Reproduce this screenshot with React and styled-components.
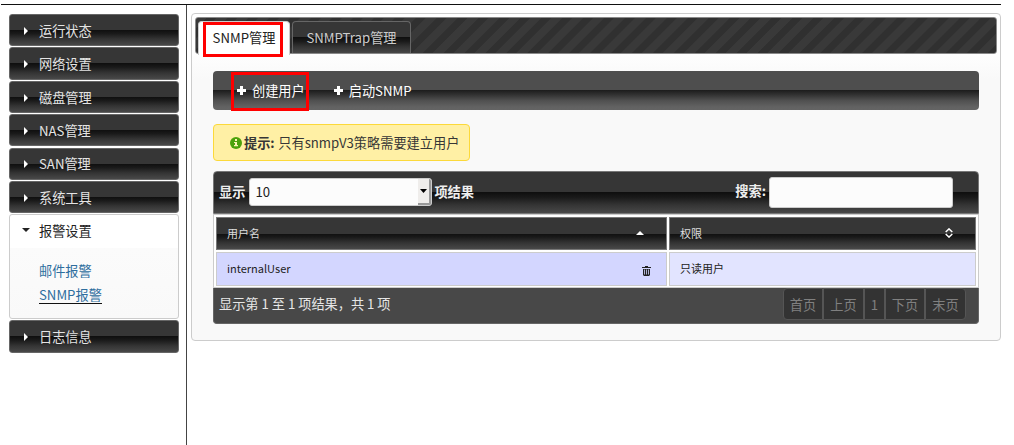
import React from 'react';
import styled, { createGlobalStyle, css } from 'styled-components';

const GlobalStyle = createGlobalStyle`
  * { box-sizing: border-box; }
  body {
    margin: 0;
    background: #fff;
    overflow: hidden;
    font: 13.2px/20px "Noto Sans CJK SC", "Noto Sans", sans-serif;
    color: #222;
  }
`;

const gloss = css`
  background: linear-gradient(#363636 0, #363636 50%, #0f0f0f 50%, #1a1a1a 62%, #343434 80%, #484848 100%);
`;

const Page = styled.div`
  width: 1001px;
  height: 445px;
  padding: 4px 0 0 1px;
`;
const Frame = styled.div`
  display: flex;
  height: 441px;
  border-top: 1px solid #111;
`;
const Sidebar = styled.nav`
  width: 186px;
  padding: 9px 7px 0 8px;
  border-right: 1px solid #444;
`;
const MenuHead = styled.div`
  display: flex;
  align-items: center;
  height: 32.2px;
  padding: 1.7px 0 0 13px;
  gap: 9px;
  margin-bottom: 1.2px;
  color: #e4e4e4;
  border: 1px solid #666;
  border-radius: 3px;
  ${gloss}
`;
const OpenSection = styled.div`
  height: 105px;
  margin-bottom: 1.2px;
  border: 1px solid #ccc;
  border-radius: 3px;
  background: linear-gradient(#fff 0, #fff 33px, #fbfbfb 33px, #f9f9f9 100%);
`;
const OpenHead = styled.div`
  display: flex;
  align-items: center;
  height: 32px;
  padding: 0 0 0 12px;
  gap: 9px;
  svg { margin-top: -2px; }
`;
const SubLinks = styled.div`
  display: flex;
  flex-direction: column;
  align-items: flex-start;
  gap: 5px;
  padding: 14px 0 0 29px;
`;
const SubLink = styled.a`
  height: 19px;
  color: #2e6e9e;
  border-bottom: 1px solid ${p => (p.$current ? '#111' : 'transparent')};
`;
const Panel = styled.main`
  width: 810px;
  height: 328px;
  margin: 8px 0 0 4px;
  padding: 3px;
  border: 1px solid #ccc;
  border-radius: 4px;
  background: linear-gradient(#fff 0, #fff 35px, #f9f9f9 65px);
`;
const TabBar = styled.div`
  display: flex;
  gap: 2px;
  height: 37px;
  padding: 3px 0 0 2px;
  border: 1px solid #8a8a8a;
  border-radius: 3px;
  background: repeating-linear-gradient(135deg, #393939 0, #393939 7px, #303030 7.8px, #303030 14px, #393939 14.8px);
`;
const Tab = styled.div`
  display: flex;
  justify-content: center;
  align-items: center;
  width: ${p => p.$w}px;
  height: 32px;
  color: #ccc;
  border: 1px solid #666;
  border-bottom: 0;
  border-radius: 4px 4px 0 0;
  ${gloss}
  ${p => p.$active && css`
    height: 34px;
    padding-bottom: 2px;
    color: #222;
    background: #fff;
    border-color: #ccc;
  `}
`;
const Marker = styled.span`
  position: absolute;
  left: ${p => p.$x}px;
  top: ${p => p.$y}px;
  width: ${p => p.$w}px;
  height: ${p => p.$h}px;
  border: 3px solid #f00;
`;
const Content = styled.div`
  display: flex;
  flex-direction: column;
  align-items: flex-start;
  padding: 17px 18px 0;
`;
const Toolbar = styled.div`
  display: flex;
  align-items: center;
  gap: 29px;
  width: 766px;
  height: 39px;
  padding: 0 0 0 24px;
  border-radius: 4px;
  color: #fff;
  background: linear-gradient(#4e4e4e 0, #4e4e4e 49%, #1c1c1c 49%, #303030 60%, #505050 76%, #626262 92%, #646464);
`;
const Action = styled.div`
  display: flex;
  align-items: center;
  gap: 6px;
`;
const Notice = styled.div`
  display: flex;
  align-items: center;
  width: 257px;
  height: 37px;
  margin: 14px 0 10px;
  padding: 0 0 0 16px;
  border: 1px solid #fcd93a;
  border-radius: 4px;
  background: #fff0a5;
  color: #363636;
  white-space: nowrap;
  svg { margin-right: 2px; }
  b { margin-right: 3.6px; }
`;
const TableTop = styled.div`
  display: flex;
  align-items: center;
  width: 766px;
  height: 43px;
  padding: 0 25px 2px 5px;
  border: 1px solid #777;
  border-radius: 4px 4px 0 0;
  color: #eee;
  font-weight: bold;
  ${gloss}
`;
const Caption = styled.span`
  padding-top: 1px;
`;
const Select = styled.div`
  display: flex;
  justify-content: space-between;
  width: 183px;
  height: 28px;
  margin: 0 2px 0 4px;
  padding-left: 5px;
  border: 1px solid #ccc;
  border-radius: 3px;
  background: #fcfcfc;
  color: #222;
  font-weight: normal;
  line-height: 26px;
  overflow: hidden;
`;
const SelectArrow = styled.span`
  display: flex;
  align-items: center;
  justify-content: center;
  width: 13px;
  height: 26px;
  background: #efedeb;
  border: solid #999;
  border-width: 0 2px 2px 0;
`;
const SearchLabel = styled.span`
  margin-left: auto;
  padding-bottom: 1px;
`;
const SearchInput = styled.input`
  width: 184px;
  height: 31px;
  margin: 2px 0 0 3px;
  border: 1px solid #ccc;
  border-radius: 3px;
  background: #fcfcfc;
`;
const Grid = styled.div`
  display: grid;
  grid-template-columns: 451px 307px;
  grid-template-rows: 33px 34px;
  gap: 2px;
  width: 766px;
  height: 74px;
  padding: 2px 0 0 2px;
  border: 1px solid #ccc;
  background: #fff;
  font-size: 11px;
`;
const HeadCell = styled.div`
  display: flex;
  align-items: center;
  justify-content: space-between;
  padding: 0 22px 1px 10px;
  border: 1px solid #777;
  color: #ddd;
  ${gloss}
`;
const Cell = styled.div`
  display: flex;
  align-items: center;
  justify-content: space-between;
  padding: 0 15px 2px 10px;
  border: 1px solid #ccc;
  background: ${p => p.$bg};
  svg { margin-top: 6px; }
`;
const TableFoot = styled.div`
  display: flex;
  justify-content: space-between;
  width: 766px;
  height: 36px;
  padding: 0 12px 0 5px;
  border: solid #666;
  border-width: 0 1px 1px;
  border-radius: 0 0 4px 4px;
  background: #484848;
  color: #e6e6e6;
  line-height: 31px;
`;
const Pager = styled.div`
  display: flex;
  height: 32px;
`;
const PageButton = styled.span`
  width: ${p => p.$w}px;
  border: 1px solid #555;
  background: #333;
  color: #808080;
  text-align: center;
  line-height: 31px;
  &:first-child { border-radius: 4px 0 0 4px; }
  &:last-child { border-radius: 0 4px 4px 0; }
`;

const ArrowRight = () => (
  <svg width="7" height="8" viewBox="0 0 7 8"><path d="M1 0L5 4L1 8Z" fill="#fff" /></svg>
);
const ArrowDown = ({ w = 8, h = 4, fill = '#222' }) => (
  <svg width={w} height={h} viewBox="0 0 8 4" preserveAspectRatio="none"><path d="M0 0H8L4 4Z" fill={fill} /></svg>
);
const Plus = () => (
  <svg width="9" height="9" viewBox="0 0 9 9"><path d="M3 0H6V3H9V6H6V9H3V6H0V3H3Z" fill="#fff" /></svg>
);
const Info = () => (
  <svg width="12" height="12" viewBox="0 0 12 12">
    <circle cx="6" cy="6" r="6" fill="#4ca20b" />
    <path d="M5 2H7V4H5ZM4 5H7V8H8V9.3H4V8H5V6H4Z" fill="#fff3b5" />
  </svg>
);
const Trash = () => (
  <svg width="9" height="10" viewBox="0 0 9 10">
    <path d="M3 0H6V1H9V2H0V1H3ZM1 3H8V9L7 10H2L1 9Z" fill="#222" />
    <path d="M2.5 3.5V8.5M4.5 3.5V8.5M6.5 3.5V8.5" stroke="#d3d6ff" strokeWidth=".8" />
  </svg>
);
const SortUp = () => (
  <svg width="8" height="4" viewBox="0 0 8 4"><path d="M0 4L4 0L8 4Z" fill="#fff" /></svg>
);
const SortBoth = () => (
  <svg width="8" height="10" viewBox="0 0 8 10" fill="none" stroke="#fff" strokeWidth="1.5">
    <path d="M.7 4L4 .9L7.3 4M.7 6L4 9.1L7.3 6" />
  </svg>
);

const MENU = ['运行状态', '网络设置', '磁盘管理', 'NAS管理', 'SAN管理', '系统工具'];
const PAGES = [['首页', 40], ['上页', 41], ['1', 21], ['下页', 40], ['末页', 41]];

export default function App() {
  return (
    <Page>
      <GlobalStyle />
      <Frame>
        <Sidebar>
          {MENU.map(t => <MenuHead key={t}><ArrowRight />{t}</MenuHead>)}
          <OpenSection>
            <OpenHead><ArrowDown />报警设置</OpenHead>
            <SubLinks>
              <SubLink>邮件报警</SubLink>
              <SubLink $current>SNMP报警</SubLink>
            </SubLinks>
          </OpenSection>
          <MenuHead><ArrowRight />日志信息</MenuHead>
        </Sidebar>
        <Panel>
          <TabBar>
            <Tab $active $w={92}>SNMP管理</Tab>
            <Tab $w={119}>SNMPTrap管理</Tab>
          </TabBar>
          <Content>
            <Toolbar>
              <Action><Plus />创建用户</Action>
              <Action><Plus />启动SNMP</Action>
            </Toolbar>
            <Notice><Info /><b>提示:</b>只有snmpV3策略需要建立用户</Notice>
            <TableTop>
              <Caption>显示</Caption>
              <Select>10<SelectArrow><ArrowDown w={7} h={4} fill="#000" /></SelectArrow></Select>
              <Caption>项结果</Caption>
              <SearchLabel>搜索:</SearchLabel>
              <SearchInput />
            </TableTop>
            <Grid>
              <HeadCell>用户名<SortUp /></HeadCell>
              <HeadCell>权限<SortBoth /></HeadCell>
              <Cell $bg="#d3d6ff">internalUser<Trash /></Cell>
              <Cell $bg="#e2e4ff">只读用户</Cell>
            </Grid>
            <TableFoot>
              显示第 1 至 1 项结果，共 1 项
              <Pager>{PAGES.map(([t, w]) => <PageButton key={t} $w={w}>{t}</PageButton>)}</Pager>
            </TableFoot>
          </Content>
        </Panel>
      </Frame>
      <Marker $x={203} $y={22} $w={80} $h={35} />
      <Marker $x={231} $y={72} $w={78} $h={39} />
    </Page>
  );
}
